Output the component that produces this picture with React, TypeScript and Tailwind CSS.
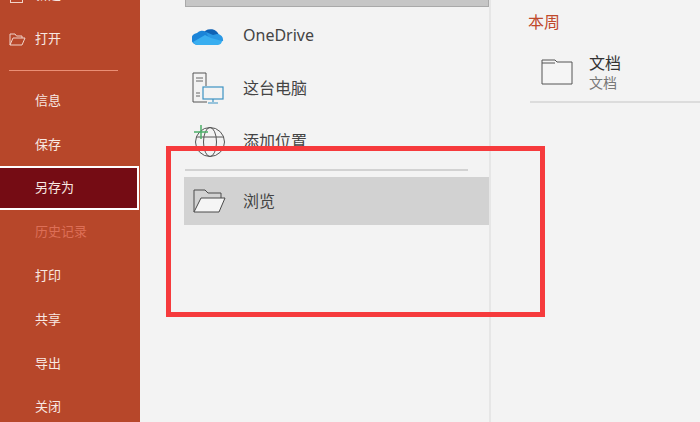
const font = "font-['Noto_Sans','Noto_Sans_CJK_SC',sans-serif]";

function OpenIcon() {
  return (
    <svg width="17" height="13" viewBox="0 0 17 13" fill="none" stroke="#f1d3c8" strokeWidth="1">
      <path d="M1 12V1h5l1.500 2H13v2" />
      <path d="M1 12h12l3-7H4z" />
    </svg>
  );
}

function OneDriveIcon() {
  return (
    <svg width="32" height="22" viewBox="0 0 32 22">
      <path d="M12 8a9 9 0 0 1 15 3l-8 6z" fill="#0f62b5" />
      <path d="M5 9a7 7 0 0 1 9-1l6 5-9 8H6a6 6 0 0 1-1-12z" fill="#1b84d8" />
      <path d="M14 8l7 3 4-1a6 6 0 0 1 6 7l-11 3z" fill="#2a98e4" />
      <path d="M6 21a5.500 5.500 0 0 1-5-3l12-7 6 3 11 3a4.500 4.500 0 0 1-4 4z" fill="#39aef0" />
    </svg>
  );
}

function ComputerIcon() {
  return (
    <svg width="32" height="32" viewBox="0 0 32 32" fill="none">
      <path d="M14 14V1H1v29h14" stroke="#555" strokeWidth="1" />
      <path d="M4 6h7M4 9h7M4 21h4M4 24h4" stroke="#666" strokeWidth="1" />
      <rect x="11" y="15" width="20" height="12" fill="#f3f3f3" stroke="#3d93c4" strokeWidth="1.200" />
      <path d="M21 27v3M16 31h10" stroke="#3d93c4" strokeWidth="1.200" />
    </svg>
  );
}

function GlobeIcon() {
  return (
    <svg width="34" height="34" viewBox="0 0 34 34" fill="none">
      <circle cx="18" cy="18" r="14.500" stroke="#555" strokeWidth="1" />
      <ellipse cx="18" cy="18" rx="6.500" ry="14.500" stroke="#555" strokeWidth="1" />
      <path d="M4 13h28M4 23h28" stroke="#555" strokeWidth="1" />
      <path d="M9 1v14M2 8h14" stroke="#4cae68" strokeWidth="1.500" />
    </svg>
  );
}

function BrowseIcon() {
  return (
    <svg width="33" height="24" viewBox="0 0 33 24" fill="none" stroke="#4a4a4a" strokeWidth="1">
      <path d="M1 23V1h11l3 3h13v5" />
      <path d="M1 23h25l6-14H8z" fill="#f5f5f5" />
    </svg>
  );
}

function FolderIcon() {
  return (
    <svg width="32" height="26" viewBox="0 0 32 26" fill="none" stroke="#555" strokeWidth="1">
      <path d="M1 25V1h13l2 2h15v22z" fill="#f5f5f5" />
      <path d="M1 4h13" />
    </svg>
  );
}

function SideItem({ label, muted }: { label: string; muted?: boolean }) {
  return (
    <div className={`h-11 flex items-center pl-[35px] text-[13px] ${muted ? "text-[#dd6f57]" : "text-[#f8e8e2]"}`}>
      {label}
    </div>
  );
}

function PlaceRow({ icon, label }: { icon: React.ReactNode; label: string }) {
  return (
    <div className="h-[53px] flex items-center">
      <div className="w-[58px] pl-[8px] flex items-center justify-start">{icon}</div>
      <span className="pl-px text-[16px] text-[#444]">{label}</span>
    </div>
  );
}

export default function App() {
  return (
    <div className={`relative w-[700px] h-[422px] overflow-hidden flex bg-[#f3f3f3] ${font}`}>
      {/* sidebar */}
      <aside className="w-[140px] h-full shrink-0 bg-[#b7472a] overflow-hidden">
        <div className="-mt-[27px]">
          <div className="h-11 flex items-center pl-[35px] text-[13px] text-[#f8e8e2] relative">
            <span className="absolute left-[10px] top-[14px] w-[13px] h-4 border border-[#f1d3c8]" />
            新建
          </div>
          <div className="h-11 flex items-center gap-[9px] pl-[9px] text-[13px] text-[#f8e8e2]">
            <OpenIcon />
            打开
          </div>
          <div className="h-[17px] pt-[9px] pl-[9px]">
            <div className="w-[109px] h-px bg-[#ea8f75]" />
          </div>
          <div>
            <div className="pt-px h-11 flex items-center pl-[35px] text-[13px] text-[#f8e8e2]">信息</div>
            <div className="pt-px h-11 flex items-center pl-[35px] text-[13px] text-[#f8e8e2]">保存</div>
            <div className="h-11 flex items-center pl-[35px] text-[13px] text-[#f8e8e2] bg-[#750c14] border-2 border-l-0 border-white w-[139px]">
              另存为
            </div>
            <SideItem label="历史记录" muted />
            <SideItem label="打印" />
            <SideItem label="共享" />
            <SideItem label="导出" />
            <div className="-mt-px">
              <SideItem label="关闭" />
            </div>
          </div>
        </div>
      </aside>

      {/* places */}
      <section className="w-[351px] h-full shrink-0 pl-[44px] border-r-2 border-[#e6e6e6]">
        <div className="h-[7px] ml-px bg-[#c6c6c6] border-x border-b border-[#a9a9a9]" />
        <div className="mt-px">
          <PlaceRow icon={<OneDriveIcon />} label="OneDrive" />
          <PlaceRow icon={<ComputerIcon />} label="这台电脑" />
          <PlaceRow icon={<GlobeIcon />} label="添加位置" />
        </div>
        <div className="mt-[2px] ml-px mr-[21px] h-[2px] bg-[#d2d2d2]" />
        <div className="mt-[6px] h-12 flex items-center bg-[#d2d2d2]">
          <div className="w-[58px] pl-[9px]">
            <BrowseIcon />
          </div>
          <span className="pl-px text-[16px] text-[#444]">浏览</span>
        </div>
      </section>

      {/* recent */}
      <section className="flex-1 pl-[37px] pt-[11px]">
        <div className="text-[16px] leading-[22px] text-[#c0492b]">本周</div>
        <div className="mt-[16px] pl-[13px] h-[46px] flex items-center gap-[16px]">
          <FolderIcon />
          <div className="mt-[2px]">
            <div className="text-[16px] leading-[20px] text-[#333]">文档</div>
            <div className="text-[14px] leading-[20px] text-[#777]">文档</div>
          </div>
        </div>
        <div className="mt-[6px] ml-[2px] h-[2px] bg-[#dcdcdc]" />
      </section>

      {/* annotation box */}
      <div className="absolute left-[166px] top-[146px] w-[379px] h-[171px] border-[5px] border-[#f63a3c]" />
    </div>
  );
}
